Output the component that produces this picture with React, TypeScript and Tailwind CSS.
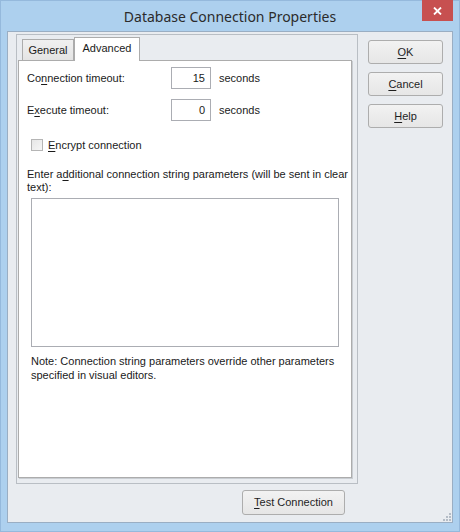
import React from 'react'

const font = { fontFamily: '"Liberation Sans", Arial, sans-serif' }

function U({ children }: { children: React.ReactNode }) {
  return <span className="underline underline-offset-[2px]">{children}</span>
}

function Button({ children, className = '' }: { children: React.ReactNode; className?: string }) {
  return (
    <button
      className={`flex items-center justify-center rounded-[3px] border border-[#adadad] bg-gradient-to-b from-[#f2f2f2] to-[#e6e6e6] text-[11px] text-[#1e1e1e] ${className}`}
    >
      {children}
    </button>
  )
}

function NumberBox({ value }: { value: string }) {
  return (
    <div className="flex h-[22px] w-[40px] items-center justify-end border border-[#abadb3] bg-white pr-[5px] text-[11px]">
      {value}
    </div>
  )
}

export default function App() {
  return (
    <div
      className="flex h-[532px] w-[460px] flex-col border border-[#95b9dc] bg-[#add0ee] text-[#1a1a1a]"
      style={font}
    >
      {/* title bar */}
      <div className="relative flex h-[30px] shrink-0 items-center justify-center">
        <span className="text-[14px] text-[#2b2b2b]" style={{ fontFamily: '"Noto Sans", sans-serif' }}>
          Database Connection Properties
        </span>
        <div className="absolute right-[6px] top-[-1px] flex h-[21px] w-[31px] items-center justify-center bg-[#c75050]">
          <svg width="9" height="8" viewBox="0 0 9 8">
            <path d="M1 0.5 L8 7.5 M8 0.5 L1 7.5" stroke="white" strokeWidth="1.8" />
          </svg>
        </div>
      </div>

      {/* client area */}
      <div className="relative mx-[6px] mb-[8px] flex flex-1 border border-[#9aaec3] bg-[#e9ecf0]">
        <div className="flex flex-col pl-[8px] pt-[2px]">
          {/* group box */}
          <div className="flex h-[450px] w-[342px] flex-col border border-[#b9bec4] px-[1px] pb-[5px] pt-[1px]">
            <div className="flex h-[24px] items-end pl-[4px] text-[11px]">
              <div className="flex h-[21px] w-[52px] items-center justify-center border border-b-0 border-[#acacac] bg-gradient-to-b from-[#f0f0f0] to-[#e4e4e4]">
                General
              </div>
              <div className="relative z-10 -mb-px flex h-[24px] w-[66px] items-center justify-center border border-b-0 border-[#acacac] bg-white pb-[2px]">
                Advanced
              </div>
            </div>
            <div className="mr-[4px] flex flex-1 flex-col border border-[#acacac] bg-white pl-[8px] text-[11px] shadow-[1px_1px_0_#c9cdd2]">
              <div className="mt-[6px] flex h-[22px] items-center">
                <span className="w-[144px]">
                  Co<U>n</U>nection timeout:
                </span>
                <NumberBox value="15" />
                <span className="ml-[8px]">seconds</span>
              </div>
              <div className="mt-[10px] flex h-[22px] items-center">
                <span className="w-[144px]">
                  E<U>x</U>ecute timeout:
                </span>
                <NumberBox value="0" />
                <span className="ml-[8px]">seconds</span>
              </div>
              <div className="ml-[4px] mt-[17px] flex h-[14px] items-center gap-[5px]">
                <div className="h-[12px] w-[12px] border border-[#b5b5b5] bg-gradient-to-br from-[#e6e6e6] to-[#f6f6f6]" />
                <span>
                  <U>E</U>ncrypt connection
                </span>
              </div>
              <p className="mt-[16px] leading-[13px]">
                Enter a<U>d</U>ditional connection string parameters (will be sent in clear
                <br />
                text):
              </p>
              <div className="ml-[4px] mt-[4px] h-[149px] w-[308px] border border-[#abadb3] bg-white" />
              <p className="ml-[4px] mt-[7px] leading-[14px]">
                Note: Connection string parameters override other parameters
                <br />
                specified in visual editors.
              </p>
            </div>
          </div>
          <div className="flex justify-end pr-[13px] pt-[6px]">
            <Button className="h-[25px] w-[103px]">
              <span>
                <U>T</U>est Connection
              </span>
            </Button>
          </div>
        </div>

        <div className="ml-[10px] flex flex-col gap-[8px] pt-[8px]">
          <Button className="h-[24px] w-[75px]">
            <U>O</U>K
          </Button>
          <Button className="h-[24px] w-[75px]">
            <span>
              <U>C</U>ancel
            </span>
          </Button>
          <Button className="h-[24px] w-[75px]">
            <span>
              <U>H</U>elp
            </span>
          </Button>
        </div>

        {/* size grip */}
        <svg className="absolute bottom-[1px] right-[1px]" width="8" height="8" viewBox="0 0 8 8">
          {[
            [6, 0],
            [6, 3],
            [3, 3],
            [6, 6],
            [3, 6],
            [0, 6],
          ].map(([x, y], i) => (
            <rect key={i} x={x} y={y} width="2" height="2" fill="#b4bcc6" />
          ))}
        </svg>
      </div>
    </div>
  )
}
